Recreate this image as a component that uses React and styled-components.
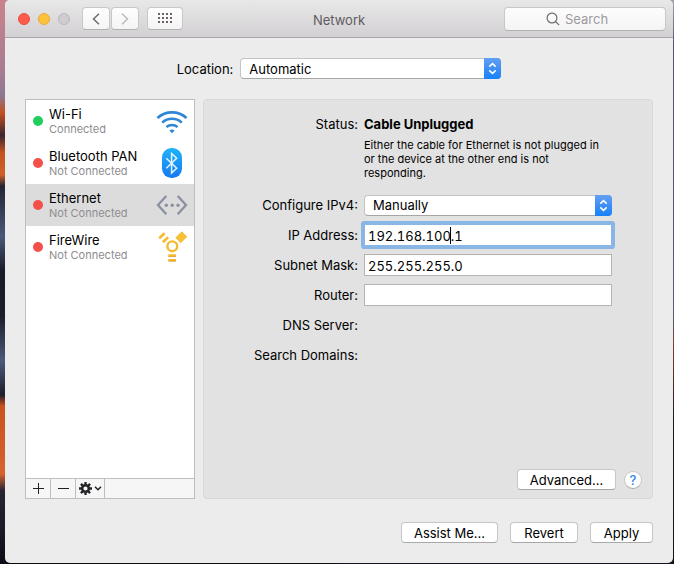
import React, { useState } from "react";
import styled, { createGlobalStyle, css } from "styled-components";

const GlobalStyle = createGlobalStyle`
  *, *::before, *::after { box-sizing: border-box; }
  body {
    margin: 0;
    font: 13px/16px Inter, "Liberation Sans", sans-serif;
    color: #000;
  }
  button, input, select { font: inherit; color: inherit; }
`;

const Desktop = styled.div`
  display: flex;
  min-height: 100vh;
  padding: 0 1px 1px 5px;
  background:
    linear-gradient(#a9a0ad, #55566a 8%, #5c5c70 56%, #7a3c28 62%, #1a1722 75%, #14121c) right / 50% 100% no-repeat,
    linear-gradient(#c9838c, #a97c92 12%, #8d7890 17%, #c4501f 20%, #3a2630 24%, #c2521f 27%, #d0602a 31%,
      #232634 33%, #4a5878 42%, #1a1b28 48%, #1c1d2a 56%, #4c5a7c 64%, #1e1d2a 70%, #c9511d 72%, #d8632c 84%,
      #2a2433 87%, #1b1a26 94%, #0d0c14) left / 50% 100% no-repeat;
`;

const Window = styled.main`
  flex: 1;
  display: flex;
  flex-direction: column;
  background: #ececec;
  border-radius: 5px;
  overflow: hidden;
`;

const TitleBar = styled.header`
  display: grid;
  grid-template-columns: 1fr auto 1fr;
  align-items: center;
  height: 38px;
  padding: 0 7px;
  background: linear-gradient(#e9e8e9, #d2d0d2);
  border-bottom: 1px solid #a9a8a9;
`;

const Title = styled.h1`
  margin: 3px 0 0;
  font-size: 13px;
  font-weight: 400;
  color: #5f5b61;
`;

const TitleTools = styled.div`
  display: flex;
  align-items: center;
  gap: 8px;
  padding-left: 6px;
`;

const TrafficLight = styled.button`
  width: 12px;
  height: 12px;
  padding: 0;
  border: 1px solid ${(p) => p.$edge};
  border-radius: 50%;
  background: ${(p) => p.$fill};
`;

const NavGroup = styled.div`
  display: flex;
  gap: 1px;
  margin-left: 4px;
`;

const ToolButton = styled.button`
  display: flex;
  align-items: center;
  justify-content: center;
  width: ${(p) => (p.$wide ? 36 : 28)}px;
  height: 23px;
  padding: 0;
  border: 1px solid #c9c7c9;
  border-bottom-color: #b3b1b3;
  border-radius: 4px;
  background: linear-gradient(#fefefe, #f4f4f4);
  color: ${(p) => (p.disabled ? "#bcbabc" : "#6c6a6d")};
`;

const SearchBox = styled.label`
  justify-self: end;
  display: flex;
  align-items: center;
  gap: 5px;
  width: 162px;
  height: 24px;
  padding-left: 41px;
  border: 1px solid #c9c7c9;
  border-bottom-color: #b3b1b3;
  border-radius: 4px;
  background: linear-gradient(#fdfdfd, #f4f4f4);
  color: #6f6d70;
`;

const SearchInput = styled.input`
  flex: 1;
  min-width: 0;
  padding: 0;
  border: 0;
  outline: 0;
  background: none;
  &::placeholder { color: #9c9a9e; opacity: 1; }
`;

const LocationRow = styled.div`
  display: flex;
  align-items: center;
  justify-content: center;
  gap: 7px;
  padding: 20px 0;
`;

const SelectFrame = styled.span`
  position: relative;
  display: block;
  width: ${(p) => (p.$fill ? "100%" : "261px")};
  height: 21px;
`;

const Select = styled.select`
  appearance: none;
  display: block;
  width: 100%;
  height: 100%;
  padding: 0 26px 0 8px;
  border: 1px solid #c4c4c4;
  border-bottom-color: #a6a6a6;
  border-radius: 4px;
  outline: 0;
  background: #fff;
`;

const SelectCap = styled.span`
  position: absolute;
  top: 0;
  right: 0;
  display: flex;
  align-items: center;
  justify-content: center;
  width: 17px;
  height: 21px;
  border-radius: 0 4px 4px 0;
  background: linear-gradient(#62a0f4, #3f8ff3 50%, #1682fb);
  pointer-events: none;
`;

const Columns = styled.div`
  flex: 1;
  display: grid;
  grid-template-columns: 170px 1fr;
  gap: 8px;
  padding: 0 20px;
`;

const Sidebar = styled.nav`
  display: flex;
  flex-direction: column;
  border: 1px solid #bebebe;
  background: #fff;
`;

const ServiceList = styled.ul`
  flex: 1;
  margin: 0;
  padding: 0;
  list-style: none;
`;

const ServiceButton = styled.button`
  display: flex;
  align-items: center;
  width: 100%;
  height: 42px;
  padding: 0 6px 0 7px;
  border: 0;
  background: ${(p) => (p.$selected ? "#dcdcdc" : "transparent")};
  text-align: left;
`;

const StatusDot = styled.span`
  width: 10px;
  height: 10px;
  margin-right: 6px;
  border-radius: 50%;
  background: ${(p) => (p.$on ? "#1fce5c" : "#f4504a")};
`;

const ServiceText = styled.span`
  flex: 1;
  display: flex;
  flex-direction: column;
  white-space: nowrap;
`;

const ServiceState = styled.span`
  font-size: 11px;
  line-height: 14px;
  color: #8e8c90;
`;

const ListTools = styled.div`
  display: flex;
  height: 20px;
  border-top: 1px solid #bebebe;
  background: #f6f6f6;
`;

const ListTool = styled.button`
  display: flex;
  align-items: center;
  justify-content: center;
  gap: 2px;
  width: ${(p) => (p.$wide ? 29 : 25)}px;
  padding: 0;
  border: 0;
  border-right: 1px solid #bebebe;
  background: none;
  color: #222;
`;

const Panel = styled.section`
  display: flex;
  flex-direction: column;
  justify-content: space-between;
  border: 1px solid #d8d8d8;
  border-radius: 4px;
  background: #e2e2e2;
`;

const Form = styled.form`
  padding: 16px 40px 0 0;
`;

const Field = styled.div`
  display: grid;
  grid-template-columns: 154px 1fr;
  column-gap: 6px;
  align-items: ${(p) => (p.$top ? "start" : "center")};
  min-height: ${(p) => (p.$top ? 74 : 30)}px;
`;

const FieldLabel = styled.label`
  text-align: right;
  white-space: nowrap;
`;

const StatusValue = styled.strong`
  display: block;
  font-weight: 700;
`;

const StatusNote = styled.p`
  margin: 6px 0 0;
  font-size: 11px;
  line-height: 14px;
`;

const InputFrame = styled.div`
  position: relative;
`;

const TextInput = styled.input`
  display: block;
  width: 100%;
  height: 22px;
  padding: 1px 3px 0;
  border: 1px solid #b3b3b3;
  border-radius: 0;
  outline: 0;
  background: #fff;
  font-variant-numeric: tabular-nums;
  ${(p) =>
    p.$active &&
    css`
      border-color: #8ab6e6;
      box-shadow: 0 0 0 3px #8ab6e6;
      border-radius: 1px;
      caret-color: transparent;
    `}
`;

const Caret = styled.span`
  position: absolute;
  top: 3px;
  left: 86px;
  width: 1px;
  height: 17px;
  background: #000;
`;

const ButtonRow = styled.div`
  display: flex;
  align-items: center;
  justify-content: flex-end;
  gap: ${(p) => (p.$inPanel ? 8 : 12)}px;
  padding: ${(p) => (p.$inPanel ? "0 10px 8px" : "23px 20px 20px")};
`;

const PushButton = styled.button`
  width: ${(p) => p.$width}px;
  height: 21px;
  padding: 0;
  border: 1px solid #c6c6c6;
  border-bottom-color: #a8a8a8;
  border-radius: 4px;
  background: #fff;
`;

const HelpButton = styled.button`
  width: 18px;
  height: 18px;
  padding: 0;
  border: 1px solid #c6c6c6;
  border-bottom-color: #a8a8a8;
  border-radius: 50%;
  background: #fff;
  color: #2f86ec;
  font-weight: 500;
  line-height: 16px;
`;

const Stroke = ({ w, h, d, width = 1.5 }) => (
  <svg width={w} height={h} viewBox={`0 0 ${w} ${h}`} fill="none" stroke="currentColor" strokeWidth={width} aria-hidden="true">
    <path d={d} />
  </svg>
);

const GridIcon = () => (
  <svg width="15" height="11" viewBox="0 0 15 11" fill="#6a6266" aria-hidden="true">
    {[0, 4, 8].map((y) => [0, 4, 8, 12].map((x) => <rect key={`${x}-${y}`} x={x} y={y} width="2" height="2" />))}
  </svg>
);

const SearchIcon = () => (
  <svg width="14" height="14" viewBox="0 0 14 14" fill="none" stroke="currentColor" strokeWidth="1.2" aria-hidden="true">
    <circle cx="6" cy="6" r="4.9" />
    <path d="M9.5 9.5 13.2 13.2" />
  </svg>
);

const WifiIcon = () => (
  <svg width="32" height="32" viewBox="0 0 32 32" fill="none" stroke="#2f86d6" aria-hidden="true">
    <path d="M1.5 13A21.5 21.5 0 0 1 30.5 13" strokeWidth="2.8" />
    <path d="M6.2 17.6A14.6 14.6 0 0 1 25.8 17.6" strokeWidth="2.6" />
    <path d="M10.4 22A8.8 8.8 0 0 1 21.6 22" strokeWidth="2.4" />
    <path d="M13.4 25.6Q16 23.6 18.6 25.6L16 28.2Z" fill="#2f86d6" stroke="none" />
  </svg>
);

const BluetoothIcon = () => (
  <svg width="32" height="32" viewBox="0 0 32 32" fill="none" aria-hidden="true">
    <defs>
      <linearGradient id="bt" x1="0" y1="0" x2="0" y2="1">
        <stop offset="0" stopColor="#1fb4fb" />
        <stop offset="1" stopColor="#1579f0" />
      </linearGradient>
    </defs>
    <rect x="6" y="1" width="20" height="30" rx="9.5" fill="url(#bt)" />
    <path d="M10.3 11.3 20.7 21.3 15.6 26V6.4L20.7 11.3 10.3 21.3" stroke="#e4f3ff" strokeWidth="1.5" />
  </svg>
);

const EthernetIcon = () => (
  <svg width="32" height="32" viewBox="0 0 32 32" fill="none" stroke="#8d92a3" strokeWidth="2.4" aria-hidden="true">
    <path d="M10.3 7 2 16 10.3 25.2M21.7 7 30 16 21.7 25.2" />
    <g fill="#8d92a3" stroke="none">
      <circle cx="10.3" cy="16.3" r="1.7" />
      <circle cx="16.2" cy="16.3" r="1.7" />
      <circle cx="22" cy="16.3" r="1.7" />
    </g>
  </svg>
);

const FireWireIcon = () => (
  <svg width="32" height="32" viewBox="0 0 32 32" fill="none" stroke="#f5bb2c" aria-hidden="true">
    <circle cx="16.3" cy="15.3" r="4.9" strokeWidth="2.4" />
    <rect x="21.8" y="2" width="7" height="8.4" transform="rotate(45 25.3 6.2)" fill="#f8c233" stroke="#e6a51f" strokeWidth=".6" />
    <path d="M3.2 7.2 8.6 2.2M6.8 11.2 12.2 6.2" strokeWidth="2.6" />
    <path d="M12.3 24.3H20M12.3 29H20" strokeWidth="2.2" />
    <path d="M12.3 25.6H20M12.3 30.3H20" stroke="#cf8a1c" strokeWidth=".7" />
  </svg>
);

const GearIcon = () => (
  <svg width="13" height="13" viewBox="0 0 13 13" fill="none" stroke="#242226" aria-hidden="true">
    <circle cx="6.5" cy="6.5" r="3.3" strokeWidth="2.4" />
    <g strokeWidth="2.3">
      {[0, 45, 90, 135].map((a) => (
        <path key={a} d="M6.5 0V2.8M6.5 10.2V13" transform={`rotate(${a} 6.5 6.5)`} />
      ))}
    </g>
  </svg>
);

const PopUp = ({ id, options, fill }) => (
  <SelectFrame $fill={fill}>
    <Select id={id}>
      {options.map((o) => (
        <option key={o}>{o}</option>
      ))}
    </Select>
    <SelectCap>
      <svg width="9" height="13" viewBox="0 0 9 13" fill="none" stroke="#fff" strokeWidth="1.5" aria-hidden="true">
        <path d="M1.3 4.6 4.5 1.6 7.7 4.6M1.3 8.4 4.5 11.4 7.7 8.4" />
      </svg>
    </SelectCap>
  </SelectFrame>
);

const services = [
  { name: "Wi-Fi", on: true, Icon: WifiIcon },
  { name: "Bluetooth PAN", Icon: BluetoothIcon },
  { name: "Ethernet", Icon: EthernetIcon },
  { name: "FireWire", Icon: FireWireIcon },
];

export default function App() {
  const [selected, setSelected] = useState("Ethernet");
  return (
    <Desktop>
      <GlobalStyle />
      <Window>
        <TitleBar>
          <TitleTools>
            <TrafficLight aria-label="Close" $fill="#fc5b4b" $edge="#e9503f" />
            <TrafficLight aria-label="Minimize" $fill="#fdc13a" $edge="#eba93a" />
            <TrafficLight aria-label="Zoom" $fill="#cfcdcf" $edge="#b9b7b9" disabled />
            <NavGroup>
              <ToolButton aria-label="Back">
                <Stroke w={8} h={12} d="M7 .8 1.5 6 7 11.2" />
              </ToolButton>
              <ToolButton aria-label="Forward" disabled>
                <Stroke w={8} h={12} d="M1 .8 6.5 6 1 11.2" />
              </ToolButton>
            </NavGroup>
            <ToolButton $wide aria-label="Show all">
              <GridIcon />
            </ToolButton>
          </TitleTools>
          <Title>Network</Title>
          <SearchBox>
            <SearchIcon />
            <SearchInput type="text" placeholder="Search" aria-label="Search" />
          </SearchBox>
        </TitleBar>

        <LocationRow>
          <label htmlFor="location">Location:</label>
          <PopUp id="location" options={["Automatic"]} />
        </LocationRow>

        <Columns>
          <Sidebar aria-label="Services">
            <ServiceList>
              {services.map(({ name, on, Icon }) => (
                <li key={name}>
                  <ServiceButton $selected={name === selected} onClick={() => setSelected(name)}>
                    <StatusDot $on={on} />
                    <ServiceText>
                      {name}
                      <ServiceState>{on ? "Connected" : "Not Connected"}</ServiceState>
                    </ServiceText>
                    <Icon />
                  </ServiceButton>
                </li>
              ))}
            </ServiceList>
            <ListTools>
              <ListTool aria-label="Add service">
                <Stroke w={11} h={11} d="M5.5 0V11M0 5.5H11" width={1} />
              </ListTool>
              <ListTool aria-label="Remove service">
                <Stroke w={11} h={11} d="M0 5.5H11" width={1} />
              </ListTool>
              <ListTool $wide aria-label="Service actions">
                <GearIcon />
                <Stroke w={8} h={5} d="M1 .8 4 3.8 7 .8" />
              </ListTool>
            </ListTools>
          </Sidebar>

          <Panel>
            <Form onSubmit={(e) => e.preventDefault()}>
              <Field $top>
                <FieldLabel as="span">Status:</FieldLabel>
                <div>
                  <StatusValue>Cable Unplugged</StatusValue>
                  <StatusNote>
                    Either the cable for Ethernet is not plugged in or the device at the other end is not responding.
                  </StatusNote>
                </div>
              </Field>
              <Field>
                <FieldLabel htmlFor="ipv4">Configure IPv4:</FieldLabel>
                <PopUp id="ipv4" fill options={["Manually"]} />
              </Field>
              <Field>
                <FieldLabel htmlFor="ip">IP Address:</FieldLabel>
                <InputFrame>
                  <TextInput id="ip" type="text" $active defaultValue="192.168.100.1" />
                  <Caret />
                </InputFrame>
              </Field>
              <Field>
                <FieldLabel htmlFor="mask">Subnet Mask:</FieldLabel>
                <TextInput id="mask" type="text" defaultValue="255.255.255.0" />
              </Field>
              <Field>
                <FieldLabel htmlFor="router">Router:</FieldLabel>
                <TextInput id="router" type="text" />
              </Field>
              <Field>
                <FieldLabel as="span">DNS Server:</FieldLabel>
              </Field>
              <Field>
                <FieldLabel as="span">Search Domains:</FieldLabel>
              </Field>
            </Form>
            <ButtonRow $inPanel>
              <PushButton $width={99}>Advanced...</PushButton>
              <HelpButton aria-label="Help">?</HelpButton>
            </ButtonRow>
          </Panel>
        </Columns>

        <ButtonRow>
          <PushButton $width={97}>Assist Me...</PushButton>
          <PushButton $width={68}>Revert</PushButton>
          <PushButton $width={63}>Apply</PushButton>
        </ButtonRow>
      </Window>
    </Desktop>
  );
}
